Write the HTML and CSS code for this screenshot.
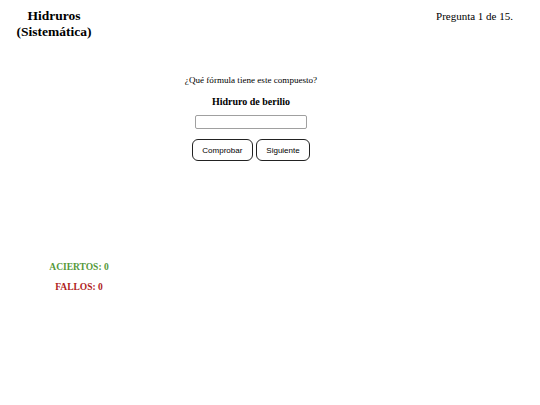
FILE: index.html
```html
<!DOCTYPE html>
<html lang="es">
<head>
<meta charset="utf-8">
<title>Hidruros (Sistemática)</title>
<link rel="stylesheet" href="styles.css">
</head>
<body>
<header class="top">
  <h1 class="title">Hidruros<br>(Sistemática)</h1>
  <div class="counter">Pregunta 1 de 15.</div>
</header>
<main class="quiz">
  <p class="question">¿Qué fórmula tiene este compuesto?</p>
  <p class="name">Hidruro de berilio</p>
  <input class="answer" type="text">
  <div class="buttons">
    <button class="btn">Comprobar</button>
    <button class="btn">Siguiente</button>
  </div>
</main>
<section class="score">
  <p class="ok">ACIERTOS: 0</p>
  <p class="bad">FALLOS: 0</p>
</section>
</body>
</html>
```

FILE: styles.css
```css
html, body {
  margin: 0;
  padding: 0;
  background: #ffffff;
  color: #000000;
  font-family: "Liberation Serif", "Times New Roman", serif;
}

.top {
  display: flex;
  justify-content: space-between;
  align-items: flex-start;
}

.title {
  margin: 8px 0 0 15px;
  width: 78px;
  text-align: center;
  font-size: 13.5px;
  line-height: 16px;
  font-weight: bold;
}

.counter {
  margin: 10px 27px 0 0;
  font-size: 11px;
  line-height: 13px;
}

.quiz {
  display: flex;
  flex-direction: column;
  align-items: center;
  width: 502px;
  padding-top: 35px;
}

.question {
  margin: 0;
  font-size: 9.1px;
  line-height: 11px;
}

.name {
  margin: 10px 0 0;
  font-size: 10px;
  line-height: 12px;
  font-weight: bold;
}

.answer {
  margin: 7px 0 0;
  width: 112px;
  height: 14px;
  box-sizing: border-box;
  border: 1px solid #a0a0a0;
  border-radius: 2px;
  padding: 0 3px;
  font-size: 8px;
}

.buttons {
  display: flex;
  gap: 3px;
  margin-top: 10px;
}

.btn {
  height: 22px;
  box-sizing: border-box;
  padding: 0 9.5px;
  border: 1px solid #222222;
  border-radius: 6px;
  background: #ffffff;
  font-family: "Liberation Sans", Arial, sans-serif;
  font-size: 8px;
  color: #000000;
}

.score {
  width: 158px;
  text-align: center;
  margin-top: 100px;
}

.score p {
  margin: 0 0 8px;
  font-size: 9.5px;
  line-height: 12px;
  font-weight: bold;
}

.ok {
  color: #55993a;
}

.bad {
  color: #b01c1c;
}
```
